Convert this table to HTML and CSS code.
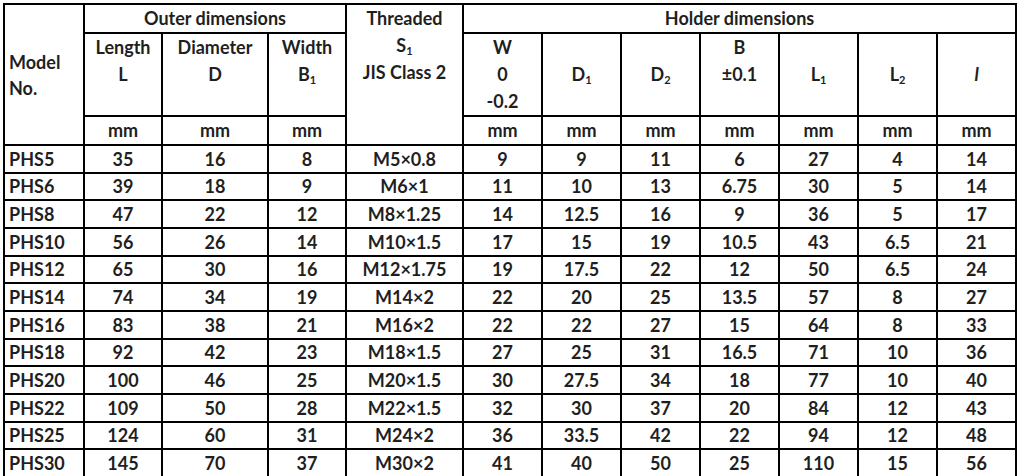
FILE: index.html
```
<!DOCTYPE html>
<html lang="en">
<head>
    <meta charset="UTF-8">
    <meta name="viewport" content="width=device-width, initial-scale=1.0">
    <title>PHS Holder Dimensions</title>
    <link rel="stylesheet" href="styles.css">
</head>
<body>
    <table class="spec-table">
        <colgroup>
            <col class="c-model">
            <col class="c-len">
            <col class="c-dia">
            <col class="c-len">
            <col class="c-thread">
            <col class="c-holder" span="7">
        </colgroup>
        <thead>
            <tr class="row-group">
                <th rowspan="3" class="model-head">Model<br>No.</th>
                <th colspan="3">Outer dimensions</th>
                <th rowspan="3" class="top">Threaded<br>S<sub>1</sub><br>JIS Class 2</th>
                <th colspan="7">Holder dimensions</th>
            </tr>
            <tr class="row-names">
                <th class="top">Length<br>L</th>
                <th class="top">Diameter<br>D</th>
                <th class="top">Width<br>B<sub>1</sub></th>
                <th class="top">W<br>0<br>-0.2</th>
                <th>D<sub>1</sub></th>
                <th>D<sub>2</sub></th>
                <th class="top">B<br>&plusmn;0.1</th>
                <th>L<sub>1</sub></th>
                <th>L<sub>2</sub></th>
                <th><i>l</i></th>
            </tr>
            <tr class="row-units">
                <th>mm</th>
                <th>mm</th>
                <th>mm</th>
                <th>mm</th>
                <th>mm</th>
                <th>mm</th>
                <th>mm</th>
                <th>mm</th>
                <th>mm</th>
                <th>mm</th>
            </tr>
        </thead>
        <tbody>
            <tr><td>PHS5</td><td>35</td><td>16</td><td>8</td><td>M5&times;0.8</td><td>9</td><td>9</td><td>11</td><td>6</td><td>27</td><td>4</td><td>14</td></tr>
            <tr><td>PHS6</td><td>39</td><td>18</td><td>9</td><td>M6&times;1</td><td>11</td><td>10</td><td>13</td><td>6.75</td><td>30</td><td>5</td><td>14</td></tr>
            <tr><td>PHS8</td><td>47</td><td>22</td><td>12</td><td>M8&times;1.25</td><td>14</td><td>12.5</td><td>16</td><td>9</td><td>36</td><td>5</td><td>17</td></tr>
            <tr><td>PHS10</td><td>56</td><td>26</td><td>14</td><td>M10&times;1.5</td><td>17</td><td>15</td><td>19</td><td>10.5</td><td>43</td><td>6.5</td><td>21</td></tr>
            <tr><td>PHS12</td><td>65</td><td>30</td><td>16</td><td>M12&times;1.75</td><td>19</td><td>17.5</td><td>22</td><td>12</td><td>50</td><td>6.5</td><td>24</td></tr>
            <tr><td>PHS14</td><td>74</td><td>34</td><td>19</td><td>M14&times;2</td><td>22</td><td>20</td><td>25</td><td>13.5</td><td>57</td><td>8</td><td>27</td></tr>
            <tr><td>PHS16</td><td>83</td><td>38</td><td>21</td><td>M16&times;2</td><td>22</td><td>22</td><td>27</td><td>15</td><td>64</td><td>8</td><td>33</td></tr>
            <tr><td>PHS18</td><td>92</td><td>42</td><td>23</td><td>M18&times;1.5</td><td>27</td><td>25</td><td>31</td><td>16.5</td><td>71</td><td>10</td><td>36</td></tr>
            <tr><td>PHS20</td><td>100</td><td>46</td><td>25</td><td>M20&times;1.5</td><td>30</td><td>27.5</td><td>34</td><td>18</td><td>77</td><td>10</td><td>40</td></tr>
            <tr><td>PHS22</td><td>109</td><td>50</td><td>28</td><td>M22&times;1.5</td><td>32</td><td>30</td><td>37</td><td>20</td><td>84</td><td>12</td><td>43</td></tr>
            <tr><td>PHS25</td><td>124</td><td>60</td><td>31</td><td>M24&times;2</td><td>36</td><td>33.5</td><td>42</td><td>22</td><td>94</td><td>12</td><td>48</td></tr>
            <tr><td>PHS30</td><td>145</td><td>70</td><td>37</td><td>M30&times;2</td><td>41</td><td>40</td><td>50</td><td>25</td><td>110</td><td>15</td><td>56</td></tr>
        </tbody>
    </table>
</body>
</html>
```

FILE: styles.css
```
/* Reset */
* {
    margin: 0;
    padding: 0;
    box-sizing: border-box;
}

body {
    font-family: 'Lato', 'Liberation Sans', sans-serif;
    background-color: #ffffff;
    color: #1f1f1f;
    padding: 3px 0 0 3px;
}

.spec-table {
    border-collapse: collapse;
    table-layout: fixed;
    width: 1014px;
    font-size: 18px;
    font-weight: bold;
}

.c-model { width: 80px; }
.c-len { width: 78px; }
.c-dia { width: 106px; }
.c-thread { width: 117px; }
.c-holder { width: 79px; }

.spec-table th,
.spec-table td {
    border: 2px solid #000000;
    text-align: center;
    vertical-align: middle;
    line-height: 27px;
    padding: 0;
    white-space: nowrap;
}

.spec-table th.top {
    vertical-align: top;
}

.spec-table th.model-head {
    text-align: left;
    padding-left: 4px;
    line-height: 26px;
}

.row-group th { height: 28px; }
.row-names th { height: 83px; }
.row-units th { height: 28px; }

.spec-table tbody td {
    height: 27.67px;
    line-height: 24px;
}

.spec-table tbody td:first-child {
    text-align: left;
    padding-left: 4px;
}

.spec-table sub {
    font-size: 11px;
    vertical-align: -3px;
    line-height: 0;
}

.spec-table i {
    font-style: italic;
}
```
